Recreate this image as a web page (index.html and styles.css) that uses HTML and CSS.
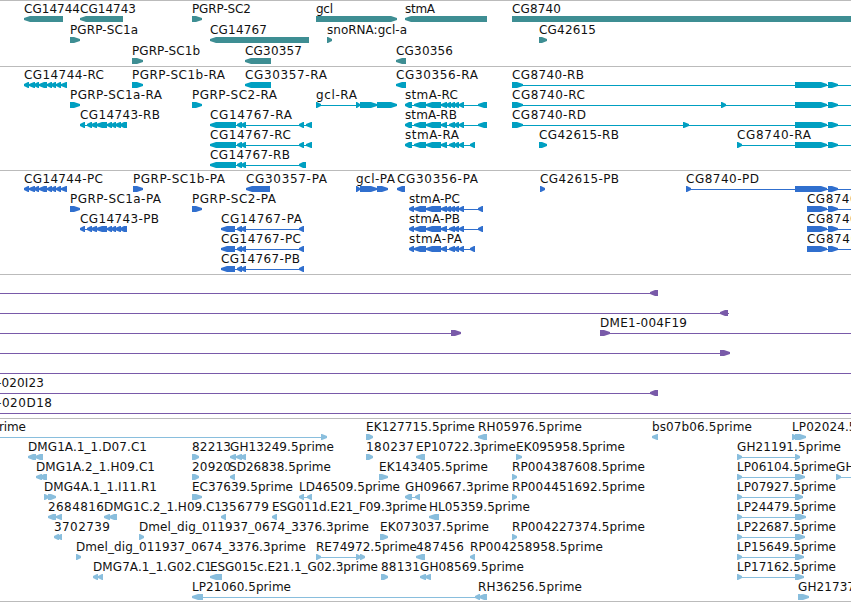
FILE: index.html
```html
<!DOCTYPE html>
<html lang="en">
<head>
<meta charset="utf-8">
<title>Genome browser</title>
<link rel="stylesheet" href="styles.css">
</head>
<body>
<main class="browser">
<section class="track genes" id="genes"></section>
<section class="track transcripts" id="transcripts"></section>
<section class="track proteins" id="proteins"></section>
<section class="track clones" id="clones"></section>
<section class="track ests" id="ests"></section>
</main>
<script src="tracks.js"></script>
</body>
</html>
```
FILE: styles.css
```css
body {
  margin: 0;
  background: #fff;
  overflow: hidden;
}
.browser {
  display: flex;
  flex-direction: column;
  width: 851px;
  height: 601px;
  overflow: hidden;
  border-bottom: 1px solid #bbb;
}
.track {
  box-sizing: border-box;
  border-top: 1px solid #bbb;
  flex: none;
  overflow: hidden;
}
.track svg {
  display: block;
  width: 851px;
  height: 100%;
}
.genes { height: 66px; color: #3e8e93; }
.transcripts { height: 104px; color: #009fc1; }
.proteins { height: 104px; color: #306fce; }
.clones { height: 144px; color: #795aa9; }
.ests { height: 183px; color: #89bedd; }
.shape { fill: currentColor; }
.label {
  fill: #111;
  font-family: "DejaVu Sans", sans-serif;
  font-size: 12px;
}
```
FILE: tracks.js
```js
// Feature line: row | label | label start | label end | strand | line start-line end | blocks
const tracks = {
  genes: { pitch: 21, data: `
0|CG14744|24|80|<||24-63
0|CG14743|80|136|<||80-123
0|PGRP-SC2|192|251|>||192-202
0|gcl|316|333|>||316-397
0|stmA|405|435|<||405-487
0|CG8740|512|561|>||512-870
1|PGRP-SC1a|70|138|>||70-80
1|CG14767|210|267|<||210-309
1|snoRNA:gcl-a|327|407|>||327-332
1|CG42615|539|596|>||539-547
2|PGRP-SC1b|132|200|>||132-143
2|CG30357|245|302|<||245-271
2|CG30356|396|453|<||396-406` },
  transcripts: { pitch: 20, data: `
0|CG14744-RC|24|104|<|24-67|24-29 29-35 34-39 39-47 47-52 51-56 56-61 61-67
0|PGRP-SC1b-RA|132|225|>||132-143
0|CG30357-RA|245|327|<||245-271
0|CG30356-RA|396|478|<||396-406
0|CG8740-RB|512|584|>|512-870|512-523 795-827 828-838
1|PGRP-SC1a-RA|70|162|>||70-80
1|PGRP-SC2-RA|192|277|>||192-202
1|gcl-RA|316|357|>|316-397|316-321 356-360 360-377 377-397
1|stmA-RC|405|458|<|405-487|405-412 414-426 426-441 441-447 446-451 450-455 454-459 459-464 478-487
1|CG8740-RC|512|585|>|512-870|512-523 721-726 795-827 828-838
2|CG14743-RB|80|160|<|80-127|80-85 87-92 91-97 96-107 107-112 111-116 115-121 120-127
2|CG14767-RA|210|292|<|210-312|210-236 237-242 241-246 299-304 306-312
2|stmA-RB|405|457|<|405-487|405-412 414-426 426-441 441-447 449-455 454-459 459-464 478-487
2|CG8740-RD|512|586|>|512-870|512-523 683-689 795-827 828-838
3|CG14767-RC|210|291|<|210-312|210-236 237-242 241-246 299-304 306-312
3|stmA-RA|405|459|<|405-475|405-412 414-426 426-441 441-447 449-455 454-459 459-464 470-475
3|CG42615-RB|539|619|>||539-547
3|CG8740-RA|737|811|>|737-870|737-742 795-827 828-838
4|CG14767-RB|210|290|<|210-306|210-236 237-242 241-246 299-306` },
  proteins: { pitch: 20, data: `
0|CG14744-PC|24|103|<|24-67|24-29 29-35 34-39 39-47 47-52 51-56 56-61 61-67
0|PGRP-SC1b-PA|133|225|>||133-143
0|CG30357-PA|246|327|<||246-270
0|gcl-PA|356|395|>|356-388|356-360 360-377 377-388
0|CG30356-PA|397|478|<||397-405
0|CG42615-PB|540|619|>||540-545
0|CG8740-PD|686|759|>|686-870|686-691 795-827 828-838
1|PGRP-SC1a-PA|70|161|>||70-80
1|PGRP-SC2-PA|192|276|>||192-202
1|stmA-PC|409|460|<|409-483|409-414 414-426 426-441 441-447 446-451 450-455 454-459 459-464 478-483
1|CG8740-PC|807|879|>|807-870|807-827 828-838
2|CG14743-PB|80|159|<|80-127|80-85 87-92 91-97 96-107 107-112 111-116 115-121 120-127
2|CG14767-PA|221|302|<|221-304|221-235 237-242 241-246 299-304
2|stmA-PB|409|460|<|409-483|409-414 414-426 426-441 441-447 449-455 454-459 459-464 478-483
2|CG8740-PB|807|879|>|807-870|807-827 828-838
3|CG14767-PC|221|301|<|221-304|221-235 237-242 241-246 299-304
3|stmA-PA|409|462|<|409-475|409-414 414-426 426-441 441-447 449-455 454-459 459-464 470-475
3|CG8740-PA|807|879|>|807-870|807-827 828-838
4|CG14767-PB|221|300|<|221-304|221-235 237-242 241-246 299-304` },
  clones: { pitch: 20, data: `
0||||<|0-658|650-658
1||||<|0-729|720-728
2||||>|0-460|451-461
2|DME1-004F19|600|687|>|600-851|600-610
3||||>|0-730|720-730
4||||>|0-851|
5|-020I23|-3|44|<|0-658|650-658
6|-020D18|-3|52|>|0-851|` },
  ests: { pitch: 20, data: `
0|rime|-1|26|>|0-326|321-327
0|EK127715.5prime|366|475|>||366-373
0|RH05976.5prime|478|582|<||478-487
0|bs07b06.5prime|652|752|<||652-658
0|LP02024.5prime|792|892|>||792-797 795-806
1|DMG1A.1_1.D07.C1|28|147|<||28-36 35-43
1|82213|192|231|>||192-199
1|GH13249.5prime|230|334|<|230-246|230-236 236-242 240-246
1|180237|366|414|>||366-373
1|EP10722.3prime|416|516|<||416-425
1|EK095958.5prime|516|625|>||516-522
1|GH21191.5prime|737|841|>|737-800|737-742 795-800
2|DMG1A.2_1.H09.C1|36|155|<||36-42 40-47
2|20920|192|231|>||192-199
2|SD26838.5prime|229|331|<||230-235
2|EK143405.5prime|379|488|>||379-388
2|RP004387608.5prime|512|645|>||512-517
2|LP06104.5prime|737|836|>|737-805|737-742 795-805
2|GH15984.5prime|836|940|>|836-860|836-841
3|DMG4A.1_1.I11.R1|44|157|>||44-49 48-56
3|EC37639.5prime|192|293|>||192-202
3|LD46509.5prime|299|400|<|299-312|299-304 307-312
3|GH09667.3prime|405|509|<|405-420|405-412 415-420
3|RP004451692.5prime|512|645|>||512-517
3|LP07927.5prime|737|836|>|737-803|737-742 795-803
4|2684816|48|104|<||48-56 56-62
4|DMG1C.2_1.H09.C1|104|222|<||104-110 109-117
4|356779|221|269|<||221-226
4|ESG011d.E21_F09.3prime|272|427|<||272-277
4|HL05359.5prime|429|530|<||429-439
4|LP24479.5prime|737|836|>|737-806|737-742 795-806
5|3702739|54|110|<||54-59 57-62
5|Dmel_dig_011937_0674_3376.3prime|139|369|>||139-144
5|EK073037.5prime|380|489|>||380-388
5|RP004227374.5prime|512|645|>||512-517
5|LP22687.5prime|737|836|>|737-805|737-742 795-805
6|Dmel_dig_011937_0674_3376.3prime|76|306|>||76-81
6|RE74972.5prime|316|417|>|316-365|316-321 356-361 360-365
6|487456|416|464|<||416-425
6|RP004258958.5prime|470|603|<||470-475
6|LP15649.5prime|737|836|>|737-804|737-742 795-804
7|DMG7A.1_1.G02.C1|93|212|<||93-98 98-103
7|ESG015c.E21.1_G02.3prime|210|378|<||210-222
7|88131|381|420|>||381-388
7|GH08569.5prime|420|524|<||420-426 425-431
7|LP17162.5prime|737|836|>|737-804|737-742 795-804
8|LP21060.5prime|192|291|<|192-487|192-203
8|RH36256.5prime|478|582|<||475-480 479-487
8|GH21737.5prime|798|902|>||798-809` }
};

// Block with a tapered head on the strand side
function block(span, strand, y) {
  const [a, b] = span.split('-').map(Number);
  const w = b - a;
  const head = w <= 6 ? w : Math.min(6, w - 3);
  const [tip, back, d] = strand === '>' ? [b, a, -1] : [a, b, 1];
  const neck = tip + d * (w <= 6 ? head - 1 : head);
  return `<path class="shape" d="M${back} ${y}H${neck}L${tip} ${y + 2}V${y + 4}L${neck} ${y + 6}H${back}Z"/>`;
}

for (const [id, { pitch, data }] of Object.entries(tracks)) {
  let shapes = '', labels = '';
  for (const line of data.trim().split('\n')) {
    const [row, label, start, end, strand, range, blocks] = line.split('|');
    const y = 15 + row * pitch;
    if (range) {
      const [a, b] = range.split('-').map(Number);
      shapes += `<rect class="shape" x="${a}" y="${y + 3}" width="${b - a}" height="1"/>`;
    }
    if (blocks) shapes += blocks.split(' ').map(s => block(s, strand, y)).join('');
    if (label) labels += `<text class="label" x="${start}" y="${y - 3}" textLength="${end - start}">${label}</text>`;
  }
  document.getElementById(id).innerHTML = `<svg>${shapes}${labels}</svg>`;
}
```
